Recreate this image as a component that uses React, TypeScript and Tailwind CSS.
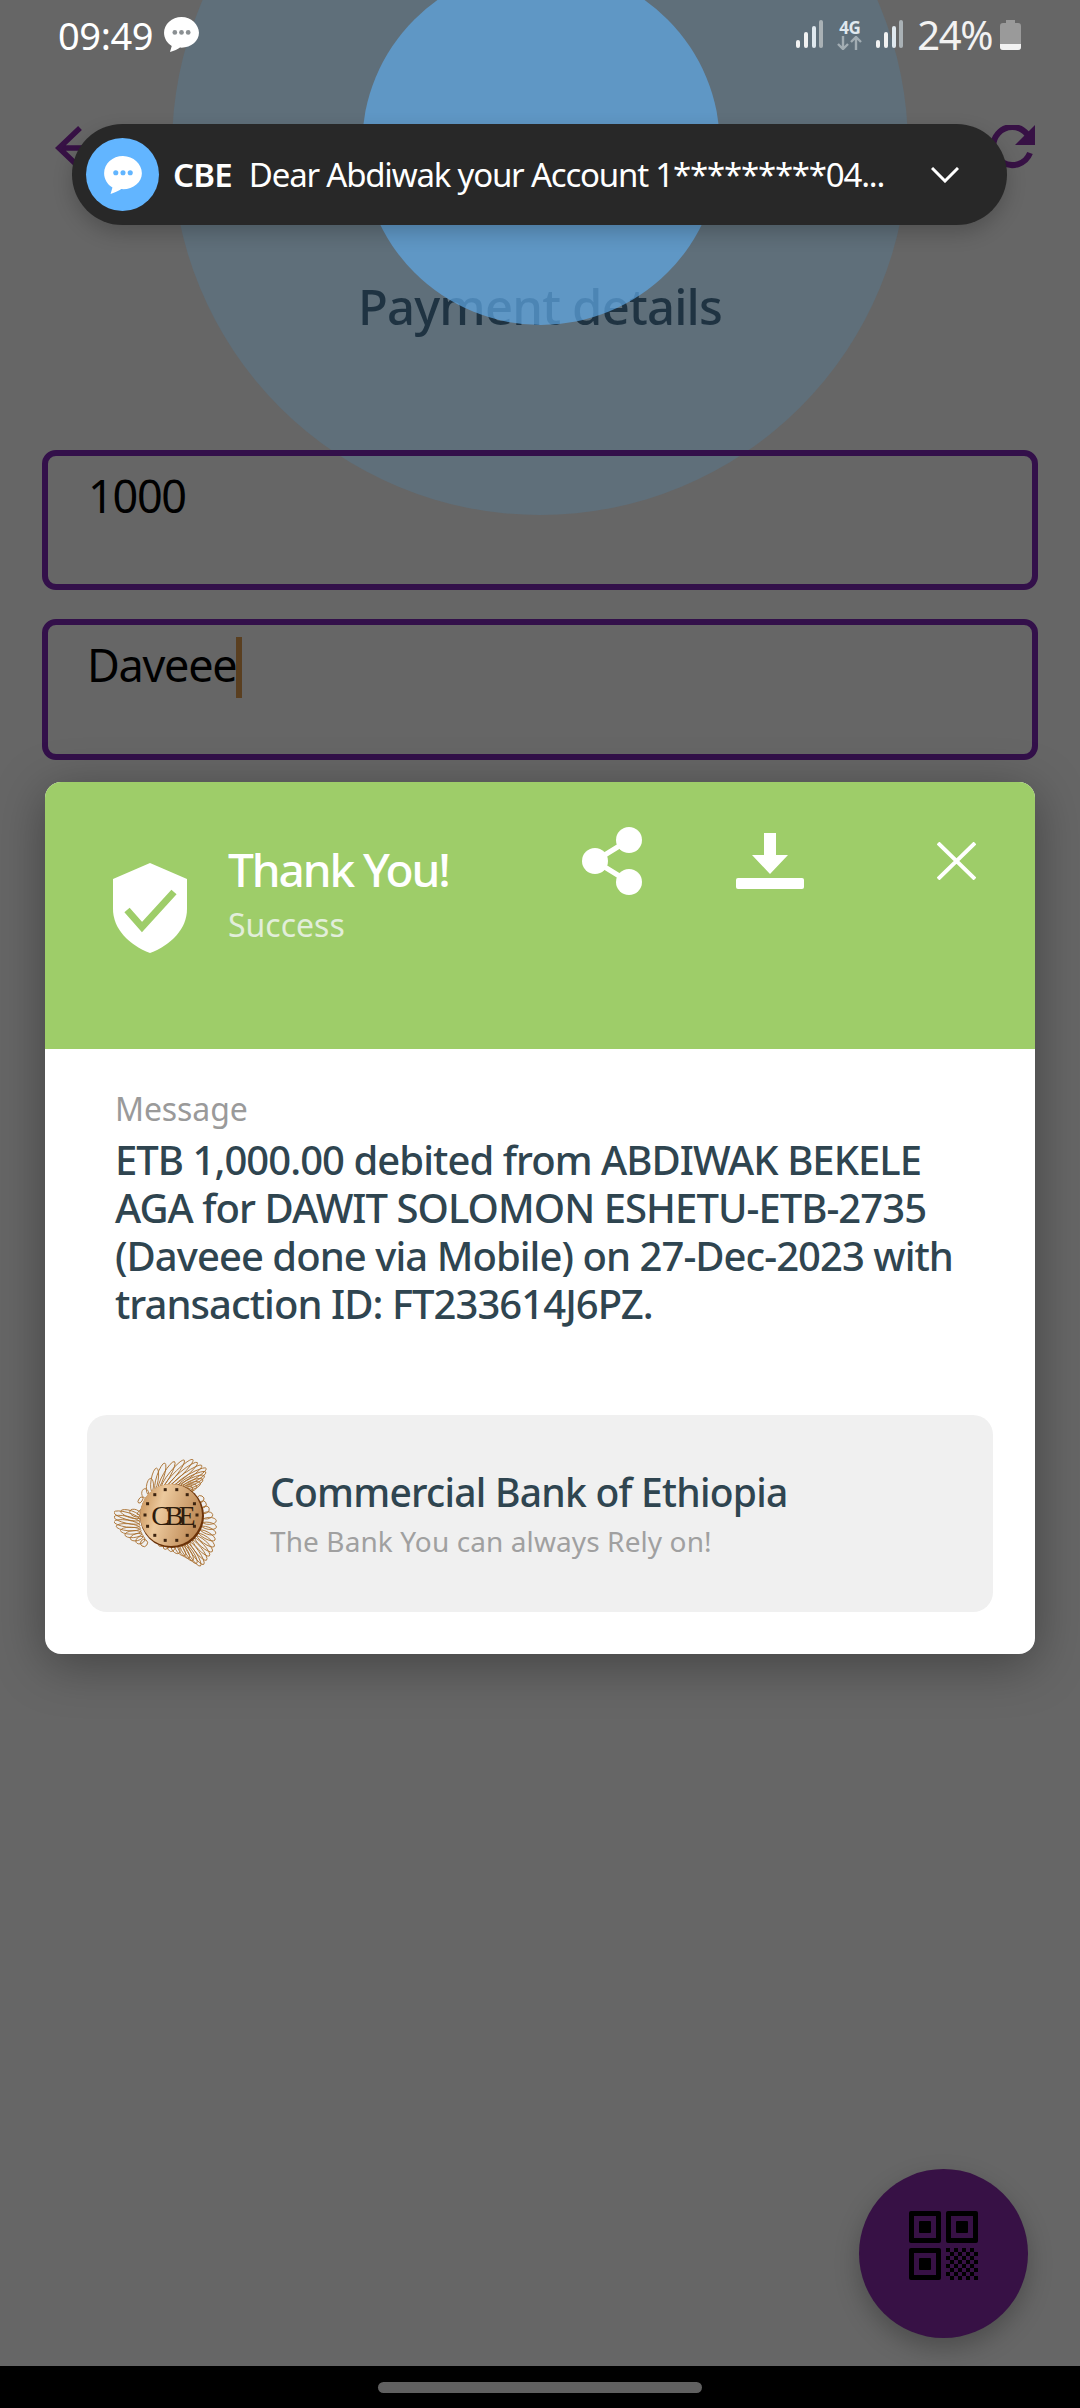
import React from "react";

const font = { fontFamily: '"Noto Sans", sans-serif' };

function Signal() {
  return (
    <svg width="27" height="28" viewBox="0 0 27 28">
      <rect x="0" y="20" width="4" height="8" rx="2" fill="#f2f2f2" />
      <rect x="8" y="12" width="4" height="16" rx="2" fill="#f2f2f2" />
      <rect x="16" y="6" width="4" height="22" rx="2" fill="#dfe8ee" />
      <rect x="23" y="0" width="4" height="28" rx="2" fill="#a9b1b5" />
    </svg>
  );
}

function Bubble({ size, dots }: { size: number; dots: string }) {
  return (
    <svg width={size} height={size} viewBox="0 0 36 36">
      <path d="M18 1C8.6 1 1 7.9 1 16.4c0 5.4 3 10.1 7.5 12.9L6.8 35c4.2-.9 7.6-2.9 9.7-4.3.5 0 1 .1 1.5.1 9.4 0 17-6.5 17-14.4S27.4 1 18 1z" fill="#fff" />
      <circle cx="11.5" cy="16" r="2.3" fill={dots} />
      <circle cx="18" cy="16" r="2.3" fill={dots} />
      <circle cx="24.5" cy="16" r="2.3" fill={dots} />
    </svg>
  );
}

function QrFinder() {
  return (
    <svg width="32" height="32" viewBox="0 0 32 32">
      <rect x="0" y="0" width="32" height="32" rx="2" fill="#000" />
      <rect x="5" y="5" width="22" height="22" fill="#371145" />
      <rect x="10" y="10" width="12" height="12" rx="1" fill="#000" />
    </svg>
  );
}

type P = [number, number];
function along(pts: P[], t: number): P {
  const s = t * (pts.length - 1);
  const i = Math.min(Math.floor(s), pts.length - 2);
  const f = s - i;
  return [pts[i][0] + (pts[i + 1][0] - pts[i][0]) * f, pts[i][1] + (pts[i + 1][1] - pts[i][1]) * f];
}

function Ribbon({ outer, inner, n }: { outer: P[]; inner: P[]; n: number }) {
  const loops = Array.from({ length: n }, (_, i) => i / (n - 1));
  return (
    <g fill="none" stroke="#a96f2e" strokeWidth="0.85">
      {loops.map((t, i) => {
        const a = along(outer, t);
        const b = along(inner, t);
        const cx = (a[0] + b[0]) / 2;
        const cy = (a[1] + b[1]) / 2;
        const dx = a[0] - b[0];
        const dy = a[1] - b[1];
        const len = Math.sqrt(dx * dx + dy * dy) / 2;
        const ang = (Math.atan2(dy, dx) * 180) / Math.PI;
        return <ellipse key={i} cx={cx} cy={cy} rx={Math.max(len, 1)} ry={3.5} transform={`rotate(${ang} ${cx} ${cy})`} />;
      })}
    </g>
  );
}

function CbeLogo() {
  const ticks = Array.from({ length: 14 }, (_, i) => i);
  return (
    <svg width="106" height="110" viewBox="0 0 106 110">
      <Ribbon
        n={18}
        outer={[[25, 40], [45, 5], [78, 0], [93, 10], [88, 23], [75, 33]]}
        inner={[[28, 42], [40, 32], [50, 28], [62, 27], [70, 29], [75, 32]]}
      />
      <Ribbon
        n={22}
        outer={[[88, 37], [103, 63], [100, 90], [88, 108], [72, 97], [48, 87]]}
        inner={[[85, 43], [88, 63], [82, 76], [72, 83], [62, 85], [48, 86]]}
      />
      <Ribbon
        n={12}
        outer={[[25, 52], [0, 52], [0, 65], [12, 77], [28, 87]]}
        inner={[[27, 54], [26, 60], [26, 68], [28, 75], [32, 81]]}
      />
      <defs>
        <linearGradient id="coin" x1="0" y1="0" x2="1" y2="0.3">
          <stop offset="0" stopColor="#c38a4e" />
          <stop offset="0.4" stopColor="#ecc99d" />
          <stop offset="1" stopColor="#c08c58" />
        </linearGradient>
      </defs>
      <circle cx="58" cy="57" r="32" fill="#6b3208" />
      <circle cx="57" cy="56" r="31" fill="url(#coin)" />
      <g fill="#3d2410">
        {ticks.map((i) => {
          const t = (i / 14) * Math.PI * 2;
          return <rect key={i} x={57 + Math.cos(t) * 26 - 1.5} y={56 + Math.sin(t) * 26 - 1.5} width="3" height="3" />;
        })}
      </g>
      <text x="57" y="66" textAnchor="middle" fontSize="28" letterSpacing="-5" fill="#2f1c0c" style={{ fontFamily: '"Liberation Serif", serif' }}>
        CBE
      </text>
    </svg>
  );
}

export default function App() {
  return (
    <div className="relative w-[1080px] h-[2408px] overflow-hidden bg-[#666666] flex flex-col" style={font}>
      {/* background ripple */}
      <div className="absolute left-[172px] top-[-221px] w-[736px] h-[736px] rounded-full bg-[#5f6f7a]" />

      <div className="relative flex items-start h-[70px] pl-[58px] pr-[59px] pt-[10px]">
        <span className="text-[38px] leading-[50px] text-white tracking-[-0.4px]">09:49</span>
        <span className="ml-[10px] mt-[6px]"><Bubble size={37} dots="#8a8f92" /></span>
        <div className="ml-auto flex items-start pt-[10px]">
          <Signal />
          <div className="w-[25px] ml-[14px] mr-[14px] flex flex-col items-center">
            <span className="text-[17px] leading-[16px] font-bold text-[#dfe8ee] tracking-[-0.5px]">4G</span>
            <svg width="25" height="14" viewBox="0 0 25 14" fill="none" stroke="#a2adb3" strokeWidth="2.4">
              <path d="M6 0v13M1 8l5 5 5-5" />
              <path d="M19 14V1M14 6l5-5 5 5" />
            </svg>
          </div>
          <Signal />
          <span className="ml-[14px] text-[40px] leading-[30px] text-[#f2f2f2] tracking-[-1.4px]">24%</span>
          <svg className="ml-[8px]" width="21" height="30" viewBox="0 0 21 30">
            <path d="M6 0h9v3h3a3 3 0 0 1 3 3v21a3 3 0 0 1-3 3H3a3 3 0 0 1-3-3V6a3 3 0 0 1 3-3h3z" fill="#9a9a9a" />
            <path d="M0 24h21v3a3 3 0 0 1-3 3H3a3 3 0 0 1-3-3z" fill="#f2f2f2" />
          </svg>
        </div>
      </div>

      <div className="relative flex justify-between items-center pl-[52px] pr-[44px] mt-[52px] h-[54px]">
        <svg width="50" height="46" viewBox="0 0 50 46" fill="none" stroke="#371145" strokeWidth="5.5">
          <path d="M48 22H7M28 2L7 22l21 20" />
        </svg>
        <svg width="48" height="48" viewBox="0 0 48 48" fill="none">
          <path d="M39 9A19 19 0 1 0 42 28" stroke="#371145" strokeWidth="6" />
          <path d="M27 20h20V0z" fill="#371145" />
        </svg>
      </div>

      <h1 className="relative mt-[98px] text-center text-[49px] leading-[64px] font-medium text-[#1f3342] tracking-[-0.8px]">Payment details</h1>

      <div className="relative mt-[112px] mx-[42px] h-[140px] border-[6px] border-[#33104a] rounded-[14px] pl-[40px] pt-[10px] text-[45px] leading-[60px] text-black tracking-[-1.3px]">1000</div>
      <div className="relative mt-[29px] mx-[42px] h-[141px] border-[6px] border-[#33104a] rounded-[14px] pl-[39px] pt-[10px] text-[45px] leading-[60px] text-black tracking-[-1.3px] flex items-start">
        <span>Daveee</span>
        <span className="mt-[2px] w-[6px] h-[61px] bg-[#5a3f20]" />
      </div>

      {/* ripple foreground */}
      <div className="absolute left-[362px] top-[-33px] w-[358px] h-[358px] rounded-full bg-[#60a8e5] opacity-70" />

      {/* dialog */}
      <div className="relative mt-[22px] mx-[45px] h-[872px] rounded-[16px] overflow-hidden bg-white shadow-[0_10px_50px_rgba(0,0,0,0.35)] flex flex-col">
        <div className="h-[267px] bg-[#9ecd69] flex items-start">
          <svg className="ml-[68px] mt-[81px] shrink-0" width="74" height="90" viewBox="0 0 74 90">
            <path d="M37 0L74 16v30c0 20-16 36-37 44C16 82 0 66 0 46V16z" fill="#fff" />
            <path d="M14 47l15 17 32-35" fill="none" stroke="#9ecd69" strokeWidth="7" />
          </svg>
          <div className="ml-[41px] mt-[56px] w-[340px] shrink-0">
            <div className="text-[46px] leading-[62px] font-medium text-white tracking-[-2.1px]">Thank You!</div>
            <div className="text-[32px] leading-[42px] text-[#e2eeda] tracking-[0px] mt-[4px]">Success</div>
          </div>
          <svg className="ml-[14px] mt-[45px] shrink-0" width="60" height="68" viewBox="0 0 60 68" fill="#fff">
            <circle cx="13" cy="34" r="13" />
            <circle cx="47" cy="13" r="13" />
            <circle cx="47" cy="55" r="13" />
            <path d="M13 34L47 13M13 34l34 21" stroke="#fff" strokeWidth="5" />
          </svg>
          <svg className="ml-[94px] mt-[51px] shrink-0" width="68" height="56" viewBox="0 0 68 56" fill="#fff">
            <path d="M28 0h12v22h12L34 41 16 22h12z" />
            <rect x="0" y="45" width="68" height="11" rx="2" />
          </svg>
          <svg className="ml-[133px] mt-[60px] shrink-0" width="39" height="38" viewBox="0 0 39 38" fill="none" stroke="#fff" strokeWidth="4">
            <path d="M1 1l37 36M38 1L1 37" />
          </svg>
        </div>
        <div className="pl-[70px] pt-[39px]">
          <div className="text-[32px] leading-[42px] text-[#9a9a9a] tracking-[-0.1px]">Message</div>
          <p className="mt-[6px] text-[40px] leading-[48px] font-medium text-[#2f4550] tracking-[-0.95px] whitespace-nowrap">
            ETB 1,000.00 debited from ABDIWAK BEKELE<br />
            AGA for DAWIT SOLOMON ESHETU-ETB-2735<br />
            (Daveee done via Mobile) on 27-Dec-2023 with<br />
            transaction ID: FT233614J6PZ.
          </p>
        </div>
        <div className="mt-[87px] mx-[42px] h-[197px] rounded-[20px] bg-[#f0f0f0] flex items-center pl-[27px]">
          <CbeLogo />
          <div className="ml-[50px]">
            <div className="text-[39px] leading-[50px] font-medium text-[#2f4550] tracking-[-0.75px]">Commercial Bank of Ethiopia</div>
            <div className="text-[28px] leading-[40px] text-[#a0a0a0] tracking-[0.1px] mt-[4px]">The Bank You can always Rely on!</div>
          </div>
        </div>
      </div>

      <div className="flex-1" />

      {/* FAB */}
      <div className="self-end mr-[52px] mb-[28px] relative w-[169px] h-[169px] rounded-full bg-[#371145] shadow-[0_10px_24px_rgba(0,0,0,0.25)] flex items-center justify-center">
        <div className="mt-[-16px] grid grid-cols-2 gap-[5px]">
          <QrFinder />
          <QrFinder />
          <QrFinder />
          <svg width="32" height="32" viewBox="0 0 32 32">
            <defs>
              <pattern id="chk" width="8" height="8" patternUnits="userSpaceOnUse">
                <rect width="4" height="4" fill="#000" />
                <rect x="4" y="4" width="4" height="4" fill="#000" />
              </pattern>
            </defs>
            <rect width="32" height="32" fill="url(#chk)" />
          </svg>
        </div>
      </div>

      {/* nav bar */}
      <div className="relative h-[42px] bg-black flex justify-center pt-[16px]">
        <div className="w-[324px] h-[11px] rounded-full bg-[#606060]" />
      </div>

      {/* heads-up notification */}
      <div className="absolute left-[72px] top-[124px] w-[935px] h-[101px] rounded-full bg-[#282828] shadow-[0_8px_20px_rgba(0,0,0,0.2)] flex items-center pl-[14px]">
        <div className="w-[73px] h-[73px] rounded-full bg-[#62b5ff] flex items-center justify-center">
          <Bubble size={40} dots="#62b5ff" />
        </div>
        <span className="ml-[14px] text-[33px] font-semibold text-white tracking-[-0.8px]">CBE</span>
        <span className="ml-[17px] text-[33px] text-white tracking-[-1.2px] whitespace-nowrap">Dear Abdiwak your Account 1*********04...</span>
        <svg className="ml-auto mr-[48px]" width="28" height="16" viewBox="0 0 28 16" fill="none" stroke="#fff" strokeWidth="3">
          <path d="M1 1l13 13L27 1" />
        </svg>
      </div>
    </div>
  );
}
